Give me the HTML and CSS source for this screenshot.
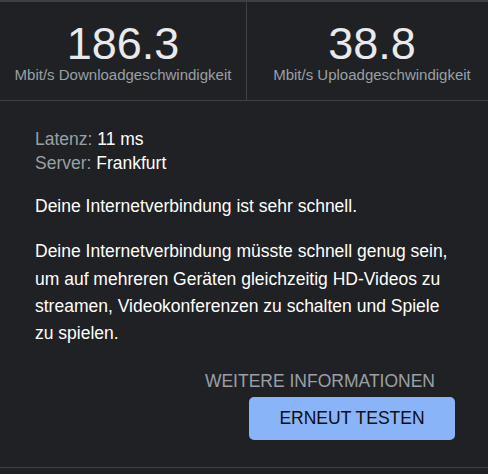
FILE: index.html
```html
<!DOCTYPE html>
<html lang="de">
<head>
<meta charset="utf-8">
<title>Speedtest</title>
<link rel="stylesheet" href="styles.css">
</head>
<body>
<div class="card">
  <div class="stats">
    <div class="stat stat-first">
      <div class="value">186.3</div>
      <div class="label">Mbit/s Downloadgeschwindigkeit</div>
    </div>
    <div class="stat">
      <div class="value">38.8</div>
      <div class="label">Mbit/s Uploadgeschwindigkeit</div>
    </div>
  </div>
  <div class="details">
    <div class="meta">
      <div><span class="key">Latenz:</span> 11 ms</div>
      <div><span class="key">Server:</span> Frankfurt</div>
    </div>
    <p class="para">Deine Internetverbindung ist sehr schnell.</p>
    <p class="para">Deine Internetverbindung müsste schnell genug sein, um auf mehreren Geräten gleichzeitig HD-Videos zu streamen, Videokonferenzen zu schalten und Spiele zu spielen.</p>
    <div class="actions">
      <a class="more">WEITERE INFORMATIONEN</a>
      <button class="retry">ERNEUT TESTEN</button>
    </div>
  </div>
</div>
</body>
</html>
```
FILE: styles.css
```css
html, body {
  margin: 0;
  padding: 0;
  overflow: hidden;
  background: #202124;
}
body {
  font-family: "Liberation Sans", Arial, sans-serif;
  color: #e8eaed;
  width: 488px;
  height: 474px;
}
.card {
  width: 497px;
  border-top: 2px solid #3c4043;
  border-bottom: 1px solid #3c4043;
  height: 465px;
  display: flex;
  flex-direction: column;
}
.stats {
  display: grid;
  grid-template-columns: 247px 250px;
  border-bottom: 1px solid #3c4043;
}
.stat {
  box-sizing: border-box;
  text-align: center;
  padding: 20px 0 15px;
}
.stat-first {
  border-right: 1px solid #3c4043;
}
.value {
  font-size: 45px;
  line-height: 43px;
  color: #e8eaed;
}
.label {
  font-size: 15px;
  line-height: 20px;
  color: #9aa0a6;
}
.details {
  width: 420px;
  padding: 26px 0 0 35px;
  box-sizing: content-box;
}
.meta {
  font-size: 17.5px;
  line-height: 24px;
  color: #ffffff;
}
.key {
  color: #9aa0a6;
}
.para {
  margin: 18px 0 0;
  font-size: 17.5px;
  line-height: 27.3px;
  color: #ffffff;
}
.actions {
  margin-top: 24px;
  display: flex;
  flex-direction: column;
  align-items: flex-end;
}
.more {
  font-size: 17.5px;
  line-height: 20px;
  color: #9aa0a6;
  margin-right: 20px;
}
.retry {
  margin-top: 6px;
  width: 206px;
  height: 43px;
  border: none;
  border-radius: 5px;
  background: #8ab4f8;
  color: #0b0c0e;
  font-family: "Liberation Sans", Arial, sans-serif;
  font-size: 17.5px;
  padding: 0;
}
```
